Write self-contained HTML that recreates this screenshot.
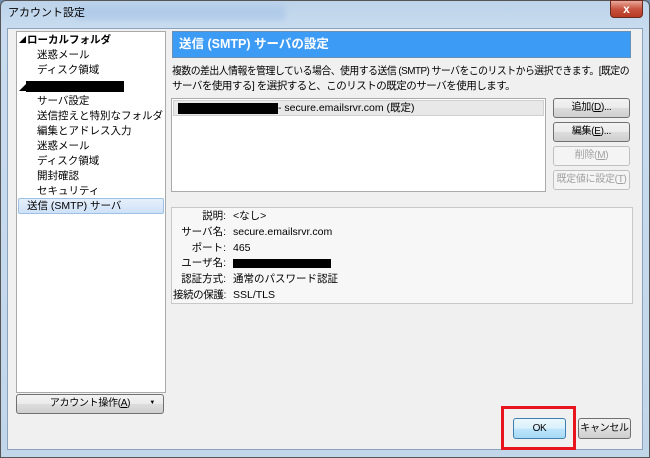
<!DOCTYPE html>
<html><head><meta charset="utf-8"><style>
*{margin:0;padding:0;box-sizing:border-box}
body{width:650px;height:458px;overflow:hidden;background:#6f8db0;font-family:"Liberation Sans","Noto Sans CJK JP",sans-serif;font-size:10.5px;line-height:13px;color:#000;position:relative}
.a{position:absolute;white-space:nowrap}
.win{left:0;top:0;width:650px;height:458px;background:linear-gradient(180deg,#bcd3ea 0,#c9dcef 28px,#c2d6ea 100%);border:1px solid #555;border-radius:6px 6px 0 0}
.client{left:7px;top:28px;width:636px;height:422px;background:#f0f0f0;border:1px solid #8ca3bd}
.btn{position:absolute;white-space:nowrap;border:1px solid #707070;border-radius:3px;background:linear-gradient(#f2f2f2,#ebebeb 50%,#dddddd 51%,#cfcfcf);text-align:center;font-size:10px;line-height:17px;letter-spacing:-0.3px}
.dis{border-color:#c0c0c0;background:#f4f4f4;color:#a0a0a0}
.tree div{position:absolute;white-space:nowrap;line-height:13px}
.lab{position:absolute;right:424px;white-space:nowrap}
.val{position:absolute;left:233px;white-space:nowrap}
</style></head><body>
<div class="a win"></div>
<div class="a" style="left:75px;top:6px;width:210px;height:14px;background:#aac6e8;filter:blur(3px);opacity:.7"></div>
<div class="a" style="left:8px;top:7px;font-size:11px">アカウント設定</div>
<div class="a" style="left:610px;top:0;width:33px;height:18px;background:linear-gradient(#e9a89b,#c8533f 50%,#b63a25);border:1px solid #6b2a20;border-radius:0 0 4px 4px;color:#fff;font-weight:bold;text-align:center;line-height:16px;font-size:12px">x</div>
<div class="a client"></div>
<div class="a tree" style="left:16px;top:31px;width:150px;height:362px;background:#fff;border:1px solid #aaa">
<div style="left:2px;top:2px;font-size:7px">◢</div>
<div style="left:10px;top:2px;font-weight:bold">ローカルフォルダ</div>
<div style="left:20px;top:17px">迷惑メール</div>
<div style="left:20px;top:32px">ディスク領域</div>
<div style="left:2px;top:50px;font-size:7px">◢</div>
<div style="left:9px;top:49px;width:98px;height:11px;background:#000"></div>
<div style="left:20px;top:63px">サーバ設定</div>
<div style="left:20px;top:78px">送信控えと特別なフォルダ</div>
<div style="left:20px;top:93px">編集とアドレス入力</div>
<div style="left:20px;top:108px">迷惑メール</div>
<div style="left:20px;top:123px">ディスク領域</div>
<div style="left:20px;top:138px">開封確認</div>
<div style="left:20px;top:153px">セキュリティ</div>
<div style="left:1px;top:166px;width:146px;height:16px;background:linear-gradient(#e6f0fb,#cfe2f7);border:1px solid #9dc0e6;border-radius:2px;padding-left:8px;line-height:14px">送信 (SMTP) サーバ</div>
</div>
<div class="btn" style="left:16px;top:394px;width:148px;height:20px">アカウント操作(<u>A</u>)<span style="position:absolute;right:8px;font-size:6px">▼</span></div>
<div class="a" style="left:172px;top:31px;width:459px;height:27px;background:#3c9bf5;border:1px solid #6a8fb5;color:#fff;font-weight:bold;font-size:12.5px;line-height:25px;padding-left:6px">送信 (SMTP) サーバの設定</div>
<div class="a" style="left:172px;top:65px;letter-spacing:-0.55px;transform:scaleX(0.94);transform-origin:0 0">複数の差出人情報を管理している場合、使用する送信 (SMTP) サーバをこのリストから選択できます。[既定の</div>
<div class="a" style="left:172px;top:80px;letter-spacing:-0.5px">サーバを使用する] を選択すると、このリストの既定のサーバを使用します。</div>
<div class="a" style="left:171px;top:98px;width:375px;height:94px;background:#fff;border:1px solid #aaa">
<div class="a" style="left:1px;top:1px;width:371px;height:16px;background:#e8e8e8;border:1px solid #d0d0d0"></div>
<div class="a" style="left:6px;top:4px;width:100px;height:11px;background:#000"></div>
<div class="a" style="left:106px;top:3px">- secure.emailsrvr.com (既定)</div>
</div>
<div class="btn" style="left:553px;top:98px;width:77px;height:20px">追加(<u>D</u>)...</div>
<div class="btn" style="left:553px;top:122px;width:77px;height:20px">編集(<u>E</u>)...</div>
<div class="btn dis" style="left:553px;top:146px;width:77px;height:20px">削除(<u>M</u>)</div>
<div class="btn dis" style="left:553px;top:170px;width:77px;height:20px">既定値に設定(<u>T</u>)</div>
<div class="a" style="left:171px;top:207px;width:462px;height:97px;background:#f7f7f7;border:1px solid #c8c8c8"></div>
<div class="lab" style="top:210px">説明:</div><div class="val" style="top:210px">&lt;なし&gt;</div>
<div class="lab" style="top:226px">サーバ名:</div><div class="val" style="top:226px">secure.emailsrvr.com</div>
<div class="lab" style="top:242px">ポート:</div><div class="val" style="top:242px">465</div>
<div class="lab" style="top:257px">ユーザ名:</div><div class="a" style="left:233px;top:259px;width:98px;height:9px;background:#000"></div>
<div class="lab" style="top:273px">認証方式:</div><div class="val" style="top:273px">通常のパスワード認証</div>
<div class="lab" style="top:289px;letter-spacing:-0.4px">接続の保護:</div><div class="val" style="top:289px">SSL/TLS</div>
<div class="a" style="left:501px;top:406px;width:75px;height:44px;border:3px solid #e8141e"></div>
<div class="btn" style="left:513px;top:418px;width:53px;height:21px;border-color:#3c7fb1;background:linear-gradient(#eaf6fd,#d9f0fc 50%,#bee6fd 51%,#a7d9f5);line-height:19px">OK</div>
<div class="btn" style="left:578px;top:418px;width:53px;height:21px;line-height:19px">キャンセル</div>
</body></html>
